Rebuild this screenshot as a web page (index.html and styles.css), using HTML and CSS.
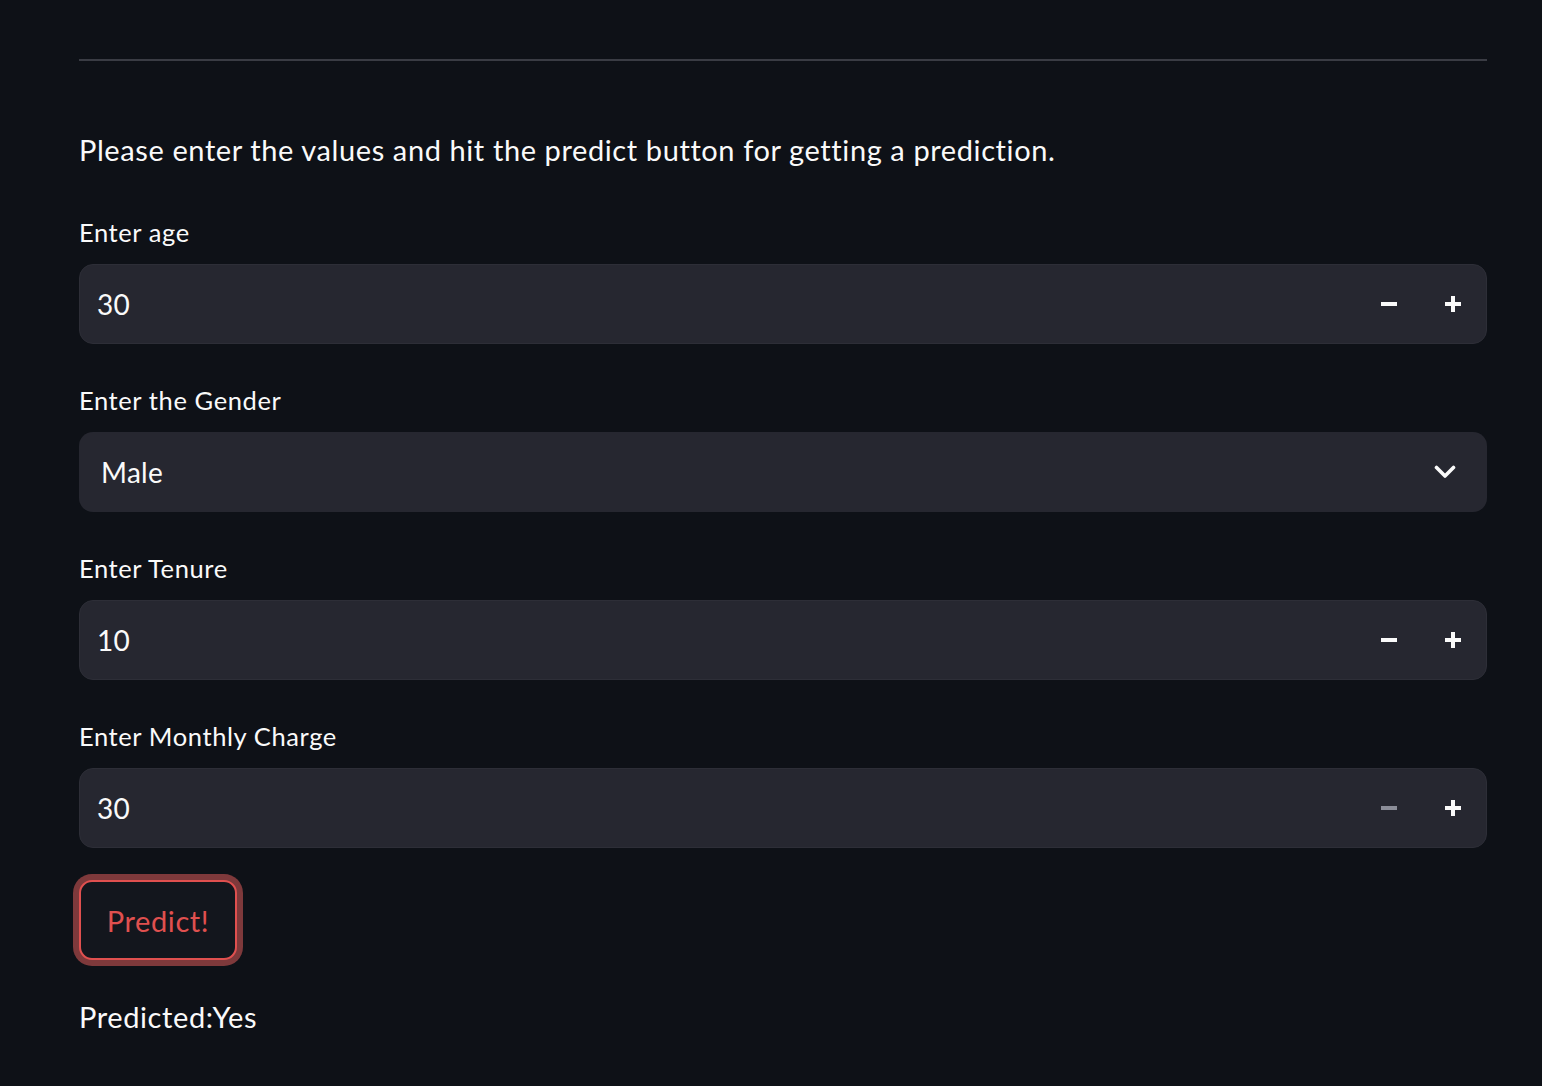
FILE: index.html
```html
<!DOCTYPE html>
<html>
<head>
<meta charset="utf-8">
<link rel="stylesheet" href="styles.css">
</head>
<body>
<main class="main">
  <hr class="divider">
  <p class="intro">Please enter the values and hit the predict button for getting a prediction.</p>
  <div class="fields">
    <div class="field">
      <label class="label">Enter age</label>
      <div class="numinput">
        <span class="value">30</span>
        <div class="steps">
          <span class="step"><svg width="16" height="16" viewBox="0 0 16 16"><rect x="0" y="6" width="16" height="4" fill="#fafafa"/></svg></span>
          <span class="step"><svg width="16" height="16" viewBox="0 0 16 16"><rect x="0" y="6" width="16" height="4" fill="#fafafa"/><rect x="6" y="0" width="4" height="16" fill="#fafafa"/></svg></span>
        </div>
      </div>
    </div>
    <div class="field">
      <label class="label">Enter the Gender</label>
      <div class="select">
        <span class="value select-value">Male</span>
        <svg class="chevron" width="22" height="14" viewBox="0 0 22 14"><path d="M2.5 2.5 L11 11 L19.5 2.5" fill="none" stroke="#fafafa" stroke-width="3.6" stroke-linecap="round" stroke-linejoin="round"/></svg>
      </div>
    </div>
    <div class="field">
      <label class="label">Enter Tenure</label>
      <div class="numinput">
        <span class="value">10</span>
        <div class="steps">
          <span class="step"><svg width="16" height="16" viewBox="0 0 16 16"><rect x="0" y="6" width="16" height="4" fill="#fafafa"/></svg></span>
          <span class="step"><svg width="16" height="16" viewBox="0 0 16 16"><rect x="0" y="6" width="16" height="4" fill="#fafafa"/><rect x="6" y="0" width="4" height="16" fill="#fafafa"/></svg></span>
        </div>
      </div>
    </div>
    <div class="field">
      <label class="label">Enter Monthly Charge</label>
      <div class="numinput">
        <span class="value">30</span>
        <div class="steps">
          <span class="step"><svg width="16" height="16" viewBox="0 0 16 16"><rect x="0" y="6" width="16" height="4" fill="#8b8d98"/></svg></span>
          <span class="step"><svg width="16" height="16" viewBox="0 0 16 16"><rect x="0" y="6" width="16" height="4" fill="#fafafa"/><rect x="6" y="0" width="4" height="16" fill="#fafafa"/></svg></span>
        </div>
      </div>
    </div>
  </div>
  <button class="predict">Predict!</button>
  <p class="result">Predicted:Yes</p>
</main>
</body>
</html>
```
FILE: styles.css
```css
html, body {
  margin: 0;
  padding: 0;
  background: #0e1117;
  color: #fafafa;
  font-family: "Lato", "Liberation Sans", sans-serif;
}
.main {
  width: 1408px;
  margin-left: 79px;
  padding-top: 59px;
  display: flex;
  flex-direction: column;
  align-items: flex-start;
}
.divider {
  width: 100%;
  margin: 0;
  border: none;
  height: 2px;
  background: #3a3c44;
}
.intro {
  margin: 68px 0 0 0;
  font-size: 29px;
  letter-spacing: 0.6px;
  line-height: 42px;
}
.fields {
  margin-top: 40px;
  width: 100%;
  display: flex;
  flex-direction: column;
  gap: 35px;
}
.field {
  display: flex;
  flex-direction: column;
}
.label {
  font-size: 25.5px;
  letter-spacing: 0.6px;
  line-height: 42px;
  margin-bottom: 11px;
}
.numinput, .select {
  box-sizing: border-box;
  height: 80px;
  background: #262730;
  border-radius: 14px;
  display: flex;
  align-items: center;
}
.numinput {
  border: 1px solid #2d2e37;
  padding-left: 17px;
}
.select {
  padding-left: 22px;
  padding-right: 31px;
  justify-content: space-between;
}
.value {
  font-size: 28px;
  letter-spacing: 0.3px;
  flex: 1;
}
.steps {
  display: flex;
  align-items: center;
  gap: 48px;
  padding-right: 25px;
}
.step {
  display: flex;
  width: 16px;
  height: 16px;
}
.predict {
  margin-top: 32px;
  box-sizing: border-box;
  width: 158px;
  height: 80px;
  background: #13161d;
  border: 2px solid #e0504f;
  border-radius: 13px;
  box-shadow: 0 0 0 6px #7e393b;
  color: #e0504f;
  font-family: inherit;
  font-size: 29px;
  letter-spacing: 0.6px;
  padding: 0;
}
.result {
  margin: 36px 0 0 0;
  font-size: 29px;
  letter-spacing: 0.6px;
  line-height: 42px;
}
```
